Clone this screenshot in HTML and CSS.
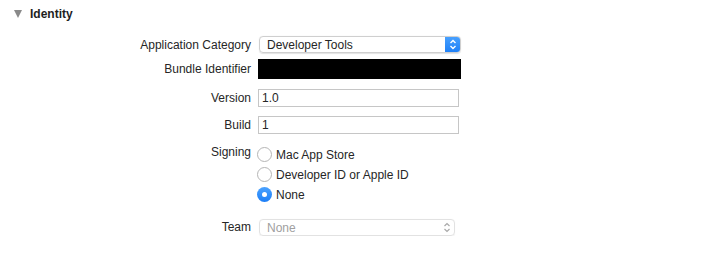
FILE: index.html
```html
<!DOCTYPE html>
<html>
<head>
<meta charset="utf-8">
<link rel="stylesheet" href="styles.css">
</head>
<body>
<div class="header">
  <span class="disclosure"></span>
  <span class="title">Identity</span>
</div>
<div class="form">
  <div class="label l-cat">Application Category</div>
  <div class="popup">
    <span class="popup-text">Developer Tools</span>
    <span class="stepper">
      <svg width="8" height="11" viewBox="0 0 8 11"><path d="M1.5 4 L4 1.5 L6.5 4 M1.5 7 L4 9.5 L6.5 7" fill="none" stroke="#fff" stroke-width="1.4"/></svg>
    </span>
  </div>

  <div class="label l-bundle">Bundle Identifier</div>
  <div class="redacted"></div>

  <div class="label l-version">Version</div>
  <div class="field f-version">1.0</div>

  <div class="label l-build">Build</div>
  <div class="field f-build">1</div>

  <div class="label l-sign">Signing</div>
  <div class="radios">
    <div class="radio-row"><span class="radio"></span><span>Mac App Store</span></div>
    <div class="radio-row"><span class="radio"></span><span>Developer ID or Apple ID</span></div>
    <div class="radio-row"><span class="radio on"></span><span>None</span></div>
  </div>

  <div class="label l-team">Team</div>
  <div class="popup disabled">
    <span class="popup-text">None</span>
    <span class="chev">
      <svg width="8" height="11" viewBox="0 0 8 11"><path d="M1.5 4 L4 1.5 L6.5 4 M1.5 7 L4 9.5 L6.5 7" fill="none" stroke="#a8a8a8" stroke-width="1.2"/></svg>
    </span>
  </div>
</div>
</body>
</html>
```
FILE: styles.css
```css
html, body {
  margin: 0;
  padding: 0;
  background: #ffffff;
  font-family: "Liberation Sans", Arial, sans-serif;
  font-size: 12px;
  color: #262626;
}
.header {
  display: flex;
  align-items: center;
  height: 14px;
  padding: 7px 0 0 14px;
}
.disclosure {
  width: 0;
  height: 0;
  border-left: 4.5px solid transparent;
  border-right: 4.5px solid transparent;
  border-top: 8px solid #8a8a8a;
  margin-right: 8px;
}
.title {
  font-weight: bold;
  color: #1e1e1e;
}
.form {
  display: grid;
  grid-template-columns: 251px 202px;
  column-gap: 8px;
  margin-top: 15px;
  align-items: start;
}
.label {
  text-align: right;
  line-height: 14px;
}
.l-cat { padding-top: 2px; }
.l-bundle { padding-top: 9px; }
.l-version { padding-top: 12px; }
.l-build { padding-top: 11px; }
.l-sign { padding-top: 11px; }
.l-team { padding-top: 18px; }

.popup {
  height: 17px;
  box-sizing: border-box;
  border: 1px solid #cfcfcf;
  border-radius: 4px;
  display: flex;
  align-items: center;
  justify-content: space-between;
  box-shadow: 0 0.5px 1px rgba(0,0,0,0.12);
  overflow: hidden;
}
.popup-text {
  padding-left: 7px;
  line-height: 14px;
}
.stepper {
  width: 16px;
  height: 17px;
  margin-right: -1px;
  background: linear-gradient(#4aa2ff, #1c7ef6);
  display: flex;
  align-items: center;
  justify-content: center;
  border-radius: 0 4px 4px 0;
}
.redacted {
  background: #000;
  height: 20px;
  margin-top: 6px;
  margin-left: -1px;
}
.field {
  height: 18px;
  box-sizing: border-box;
  border: 1px solid #c6c6c6;
  margin-left: -1px;
  width: 201px;
  padding-left: 3px;
  line-height: 16px;
}
.f-version { margin-top: 10px; }
.f-build { margin-top: 9px; }
.radios {
  margin-top: 13px;
  margin-left: -2px;
  display: flex;
  flex-direction: column;
  gap: 5px;
}
.radio-row {
  display: flex;
  align-items: center;
  height: 15px;
  gap: 4px;
}
.radio {
  width: 15px;
  height: 15px;
  box-sizing: border-box;
  border: 1px solid #b5b5b5;
  border-radius: 50%;
  background: #fff;
  display: flex;
  align-items: center;
  justify-content: center;
}
.radio.on {
  border: none;
  background: linear-gradient(#4aa2ff, #1c7ef6);
}
.radio.on::after {
  content: "";
  width: 5px;
  height: 5px;
  border-radius: 50%;
  background: #fff;
}
.popup.disabled {
  margin-top: 17px;
  width: 196px;
  border-color: #e2e2e2;
  box-shadow: 0 0.5px 1px rgba(0,0,0,0.06);
}
.popup.disabled .popup-text {
  color: #a0a0a0;
}
.chev {
  width: 14px;
  display: flex;
  align-items: center;
  justify-content: center;
}
```
